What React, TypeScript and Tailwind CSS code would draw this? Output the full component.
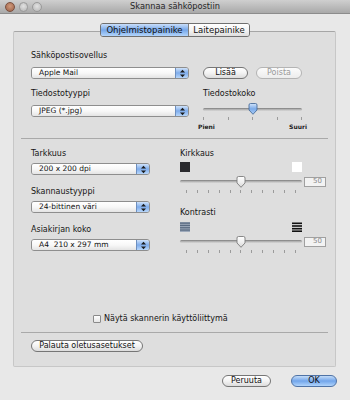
import type { ReactNode } from "react";

function PopupArrows() {
  return (
    <svg width="7" height="9" viewBox="0 0 7 9">
      <path d="M3.5 0.8 L6 3.6 H1 Z" fill="#1b1b1b" />
      <path d="M1 5.4 H6 L3.5 8.2 Z" fill="#1b1b1b" />
    </svg>
  );
}

function Popup({ text, className }: { text: string; className: string }) {
  return (
    <div className={`flex h-[12px] overflow-hidden rounded-[3px] border border-[#8e8e8e] ${className}`}>
      <div className="flex flex-1 items-center bg-gradient-to-b from-white via-[#f8f8f8] to-[#e4e4e4] pl-[7px] text-[7.5px] leading-none text-[#111]">
        {text}
      </div>
      <div className="flex w-[13px] items-center justify-center border-l border-[#6d8fbf] bg-gradient-to-b from-[#cfe2fa] via-[#7eaceb] to-[#b8d7fb]">
        <PopupArrows />
      </div>
    </div>
  );
}

function Capsule({
  children,
  className,
  disabled,
  primary,
}: {
  children: ReactNode;
  className: string;
  disabled?: boolean;
  primary?: boolean;
}) {
  const look = primary
    ? "border-[#4f73a6] bg-gradient-to-b from-[#c4dcf8] via-[#72a5ea] to-[#b0d4fb] text-[#111]"
    : disabled
      ? "border-[#b4b4b4] bg-gradient-to-b from-[#fbfbfb] to-[#ececec] text-[#9a9a9a]"
      : "border-[#767676] bg-gradient-to-b from-white via-[#f3f3f3] to-[#dcdcdc] text-[#111]";
  return (
    <div className={`flex h-[12px] items-center justify-center rounded-full border text-[8px] leading-none ${look} ${className}`}>
      {children}
    </div>
  );
}

function Thumb({ blue }: { blue?: boolean }) {
  return (
    <svg width="11" height="12" viewBox="0 0 11 12">
      <defs>
        <linearGradient id={blue ? "tb" : "tw"} x1="0" y1="0" x2="0" y2="1">
          <stop offset="0" stopColor={blue ? "#d3e5fb" : "#ffffff"} />
          <stop offset="0.5" stopColor={blue ? "#7cabe9" : "#f0f0f0"} />
          <stop offset="1" stopColor={blue ? "#a9cdf7" : "#d6d6d6"} />
        </linearGradient>
      </defs>
      <path
        d="M1.5 2 Q1.5 0.5 3 0.5 H8 Q9.5 0.5 9.5 2 V7 L5.5 11.3 L1.5 7 Z"
        fill={`url(#${blue ? "tb" : "tw"})`}
        stroke={blue ? "#4a6d9c" : "#7a7a7a"}
        strokeWidth="0.9"
      />
    </svg>
  );
}

function Track() {
  return <div className="h-[3px] w-full rounded-full bg-gradient-to-b from-[#7c7c7c] via-[#b3b3b3] to-[#d9d9d9]" />;
}

function Ticks({ count, className }: { count: number; className: string }) {
  return (
    <div className={`flex h-[3px] justify-between ${className}`}>
      {Array.from({ length: count }).map((_, i) => (
        <div key={i} className="h-full w-px bg-[#9b9b9b]" />
      ))}
    </div>
  );
}

function ValueSlider() {
  return (
    <div className="flex h-[11px] items-center">
      <div className="relative flex h-full w-[122px] items-center">
        <Track />
        <div className="absolute left-1/2 top-0 -translate-x-1/2">
          <Thumb />
        </div>
      </div>
      <div className="ml-[2px] flex h-[10px] w-[22px] items-center justify-end border border-[#a0a0a0] bg-[#f3f3f3] pr-[3px] text-[7px] leading-none text-[#8a8a8a]">
        50
      </div>
    </div>
  );
}

function Label({ children, className = "" }: { children: ReactNode; className?: string }) {
  return <div className={`h-[10px] text-[8px] leading-[10px] text-[#151515] ${className}`}>{children}</div>;
}

function Separator({ className }: { className: string }) {
  return <div className={`mx-[7px] h-px bg-[#a9a9a9] ${className}`} />;
}

function Stripes({ dark }: { dark?: boolean }) {
  return (
    <svg width="10" height="10" viewBox="0 0 10 10">
      {dark ? (
        <>
          <rect x="0" y="0.5" width="10" height="1.6" fill="#111" />
          <rect x="0" y="3.2" width="10" height="1.6" fill="#111" />
          <rect x="0" y="5.9" width="10" height="1.6" fill="#111" />
          <rect x="0" y="8.4" width="10" height="1.6" fill="#111" />
        </>
      ) : (
        <>
          <rect x="0" y="0" width="10" height="10" fill="#9eaabb" />
          <rect x="0" y="0.5" width="10" height="1.3" fill="#5a6b82" />
          <rect x="0" y="2.8" width="10" height="1.3" fill="#5a6b82" />
          <rect x="0" y="5.1" width="10" height="1.3" fill="#5a6b82" />
          <rect x="0" y="7.4" width="10" height="1.3" fill="#5a6b82" />
        </>
      )}
    </svg>
  );
}

export default function App() {
  return (
    <div className="flex h-[400px] w-[350px] flex-col overflow-hidden bg-[#e8e8e8] font-['DejaVu_Sans',sans-serif]">
      {/* title bar */}
      <div className="flex h-[14px] items-center border-b border-[#8c8c8c] bg-gradient-to-b from-[#cfcfcf] to-[#a9a9a9] pl-[5px]">
        <div className="flex w-[37px] gap-[4px]">
          <div className="h-[10px] w-[10px] rounded-full border border-[#7a5040] bg-[radial-gradient(circle_at_50%_40%,#d19a7c,#9a5f46)]" />
          <div className="h-[10px] w-[10px] rounded-full border border-[#9a9a9a] bg-[radial-gradient(circle_at_50%_40%,#e2e2e2,#b4b4b4)]" />
          <div className="h-[10px] w-[10px] rounded-full border border-[#9a9a9a] bg-[radial-gradient(circle_at_50%_40%,#e2e2e2,#b4b4b4)]" />
        </div>
        <div className="flex-1 text-center text-[8.25px] leading-none text-[#262626]">Skannaa sähköpostiin</div>
        <div className="w-[42px]" />
      </div>

      {/* tabs */}
      <div className="relative z-10 mt-[9px] flex justify-center">
        <div className="flex h-[14px] overflow-hidden rounded-[3px] border border-[#6f6f6f] text-[8.5px] leading-none text-[#111]">
          <div className="flex w-[87px] items-center justify-center bg-gradient-to-b from-[#c9defa] via-[#76a7e9] to-[#b3d5fb]">
            Ohjelmistopainike
          </div>
          <div className="flex w-[61px] items-center justify-center border-l border-[#7d7d7d] bg-gradient-to-b from-white via-[#f4f4f4] to-[#dedede]">
            Laitepainike
          </div>
        </div>
      </div>

      {/* group box */}
      <div className="-mt-[6px] ml-[13px] flex h-[336px] w-[323px] flex-col rounded-[2px] border border-[#c7c7c7] border-t-[#a6a6a6] bg-[#dedede]">
        <div className="pl-[17px] pt-[19px]">
          <Label>Sähköpostisovellus</Label>
          <div className="mt-[6px] flex items-center">
            <Popup text="Apple Mail" className="w-[158px]" />
            <Capsule className="ml-[14px] w-[45px]">Lisää</Capsule>
            <Capsule className="ml-[8px] w-[46px]" disabled>
              Poista
            </Capsule>
          </div>
          <div className="mt-[10px] flex">
            <div className="w-[158px]">
              <Label>Tiedostotyyppi</Label>
              <Popup text="JPEG (*.jpg)" className="mt-[6px] w-[158px]" />
            </div>
            <div className="ml-[14px] w-[99px]">
              <Label>Tiedostokoko</Label>
              <div className="relative mt-[4px] flex h-[12px] items-center">
                <Track />
                <div className="absolute left-1/2 top-0 -translate-x-1/2">
                  <Thumb blue />
                </div>
              </div>
              <Ticks count={5} className="mt-[2px]" />
              <div className="-mx-[5px] mt-[3px] flex justify-between text-[6px] font-bold leading-[8px] text-[#1c1c1c]">
                <span>Pieni</span>
                <span>Suuri</span>
              </div>
            </div>
          </div>
        </div>

        <Separator className="mt-[7px]" />

        <div className="mt-[10px] flex pl-[17px]">
          <div className="w-[119px]">
            <Label>Tarkkuus</Label>
            <Popup text="200 x 200 dpi" className="mt-[4px] w-[119px]" />
            <Label className="mt-[12px]">Skannaustyyppi</Label>
            <Popup text="24-bittinen väri" className="mt-[4px] w-[119px]" />
            <Label className="mt-[12px]">Asiakirjan koko</Label>
            <Popup text="A4  210 x 297 mm" className="mt-[4px] w-[119px] whitespace-pre" />
          </div>
          <div className="ml-[30px] w-[146px]">
            <Label>Kirkkaus</Label>
            <div className="mt-[3px] flex h-[10px] w-[122px] justify-between">
              <div className="h-[10px] w-[10px] bg-[#2a2a2e]" />
              <div className="h-[10px] w-[10px] bg-white" />
            </div>
            <div className="mt-[4px]">
              <ValueSlider />
            </div>
            <Ticks count={11} className="mt-[3px] w-[122px] px-[6px]" />
            <Label className="mt-[15px]">Kontrasti</Label>
            <div className="mt-[4px] flex h-[10px] w-[122px] justify-between">
              <Stripes />
              <Stripes dark />
            </div>
            <div className="mt-[4px]">
              <ValueSlider />
            </div>
            <Ticks count={11} className="mt-[3px] w-[122px] px-[6px]" />
          </div>
        </div>

        <div className="mt-[61px] flex h-[10px] items-center pl-[79px]">
          <div className="h-[8px] w-[8px] rounded-[1px] border border-[#8a8a8a] bg-gradient-to-b from-white to-[#e6e6e6]" />
          <span className="ml-[3px] text-[8px] leading-[10px] text-[#151515]">Näytä skannerin käyttöliittymä</span>
        </div>

        <Separator className="mt-[8px]" />

        <Capsule className="ml-[17px] mt-[7px] w-[112px]">Palauta oletusasetukset</Capsule>
      </div>

      <div className="mt-[8px] flex justify-end gap-[20px] pr-[13px]">
        <Capsule className="w-[49px]">Peruuta</Capsule>
        <Capsule className="w-[46px]" primary>
          OK
        </Capsule>
      </div>
    </div>
  );
}
